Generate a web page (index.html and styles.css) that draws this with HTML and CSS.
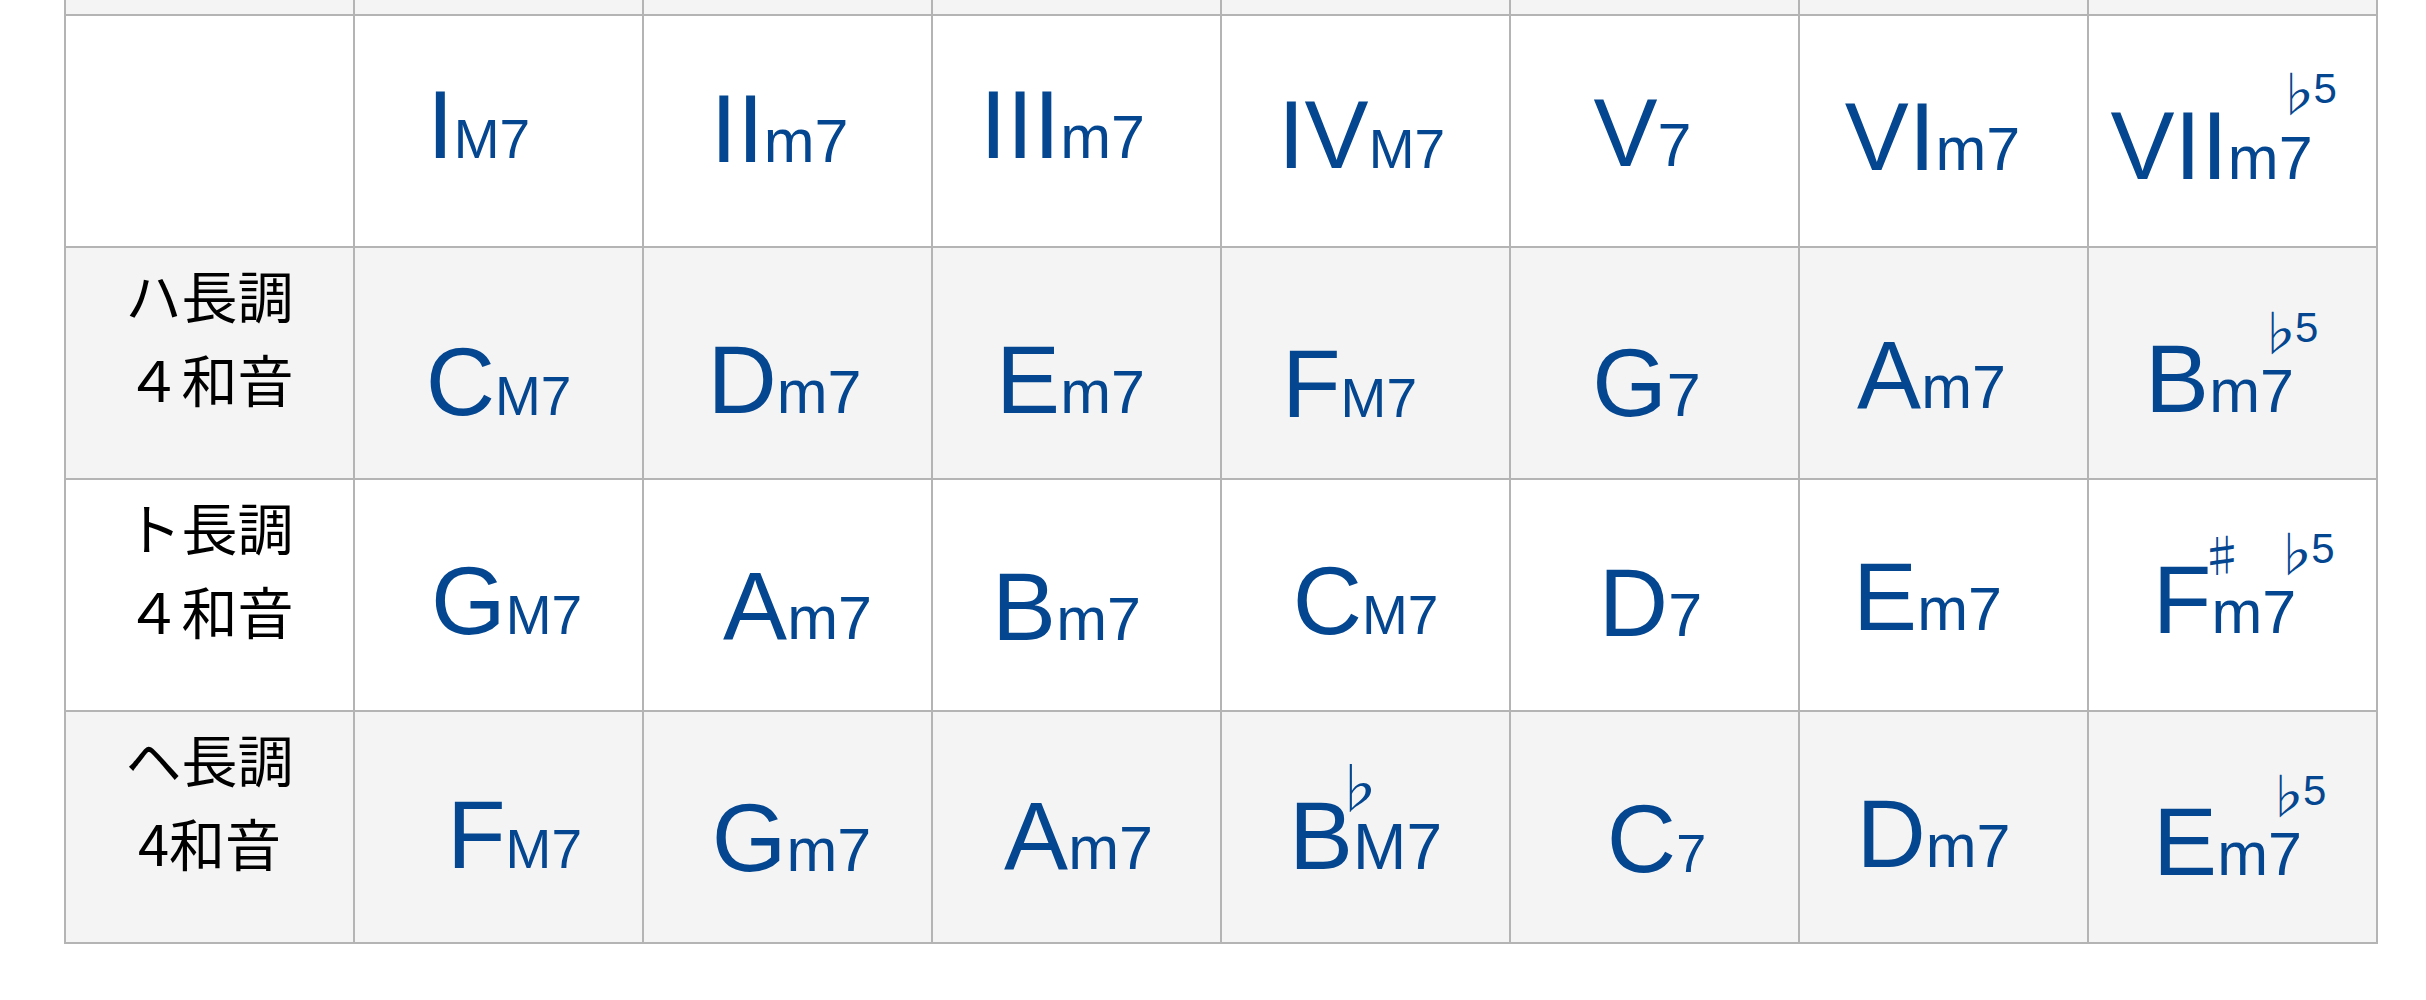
FILE: index.html
```html
<!DOCTYPE html>
<html lang="ja">
<head>
<meta charset="utf-8">
<title>4和音</title>
<link rel="stylesheet" href="styles.css">
</head>
<body>
<div class="table">
  <div class="row alt stub">
    <div class="cell"></div><div class="cell"></div><div class="cell"></div><div class="cell"></div>
    <div class="cell"></div><div class="cell"></div><div class="cell"></div><div class="cell"></div>
  </div>

  <div class="row">
    <div class="cell label"></div>
    <div class="cell"><div class="chord n-h1"><span class="root">I</span><span class="q qM">M7</span></div></div>
    <div class="cell"><div class="chord n-h2"><span class="root">II</span><span class="q">m7</span></div></div>
    <div class="cell"><div class="chord n-h3"><span class="root">III</span><span class="q">m7</span></div></div>
    <div class="cell"><div class="chord n-h4"><span class="root">IV</span><span class="q qM">M7</span></div></div>
    <div class="cell"><div class="chord n-h5"><span class="root">V</span><span class="q">7</span></div></div>
    <div class="cell"><div class="chord n-h6"><span class="root">VI</span><span class="q">m7</span></div></div>
    <div class="cell"><div class="chord n-h7"><span class="root">VII</span><span class="q">m7<span class="ext high"><span class="fl">♭</span><span class="n5">5</span></span></span></div></div>
  </div>

  <div class="row alt">
    <div class="cell label"><span>ハ長調</span><span>４和音</span></div>
    <div class="cell"><div class="chord n-a1"><span class="root">C</span><span class="q qM">M7</span></div></div>
    <div class="cell"><div class="chord n-a2"><span class="root">D</span><span class="q">m7</span></div></div>
    <div class="cell"><div class="chord n-a3"><span class="root">E</span><span class="q">m7</span></div></div>
    <div class="cell"><div class="chord n-a4"><span class="root">F</span><span class="q qM">M7</span></div></div>
    <div class="cell"><div class="chord n-a5"><span class="root">G</span><span class="q">7</span></div></div>
    <div class="cell"><div class="chord n-a6"><span class="root">A</span><span class="q">m7</span></div></div>
    <div class="cell"><div class="chord n-a7"><span class="root">B</span><span class="q">m7<span class="ext"><span class="fl">♭</span><span class="n5">5</span></span></span></div></div>
  </div>

  <div class="row">
    <div class="cell label"><span>ト長調</span><span>４和音</span></div>
    <div class="cell"><div class="chord n-b1"><span class="root">G</span><span class="q qM">M7</span></div></div>
    <div class="cell"><div class="chord n-b2"><span class="root">A</span><span class="q">m7</span></div></div>
    <div class="cell"><div class="chord n-b3"><span class="root">B</span><span class="q">m7</span></div></div>
    <div class="cell"><div class="chord n-b4"><span class="root">C</span><span class="q qM">M7</span></div></div>
    <div class="cell"><div class="chord n-b5"><span class="root">D</span><span class="q">7</span></div></div>
    <div class="cell"><div class="chord n-b6"><span class="root">E</span><span class="q">m7</span></div></div>
    <div class="cell"><div class="chord n-b7"><span class="root">F<span class="acc sharp">♯</span></span><span class="q">m7<span class="ext far"><span class="fl">♭</span><span class="n5">5</span></span></span></div></div>
  </div>

  <div class="row alt">
    <div class="cell label"><span>ヘ長調</span><span>4和音</span></div>
    <div class="cell"><div class="chord n-c1"><span class="root">F</span><span class="q qM">M7</span></div></div>
    <div class="cell"><div class="chord n-c2"><span class="root">G</span><span class="q">m7</span></div></div>
    <div class="cell"><div class="chord n-c3"><span class="root">A</span><span class="q">m7</span></div></div>
    <div class="cell"><div class="chord n-c4"><span class="root">B<span class="acc flat">♭</span></span><span class="q qM qL">M7</span></div></div>
    <div class="cell"><div class="chord n-c5"><span class="root">C</span><span class="q qS">7</span></div></div>
    <div class="cell"><div class="chord n-c6"><span class="root">D</span><span class="q">m7</span></div></div>
    <div class="cell"><div class="chord n-c7"><span class="root">E</span><span class="q">m7<span class="ext"><span class="fl">♭</span><span class="n5">5</span></span></span></div></div>
  </div>
</div>
</body>
</html>
```

FILE: styles.css
```css
* { box-sizing: border-box; }

html, body {
  margin: 0;
  padding: 0;
  background: #ffffff;
}

body {
  font-family: "Liberation Sans", Arial, sans-serif;
}

.table {
  margin-left: 64px;
  width: 2314px;
  border-left: 2px solid #b4b4b4;
}

.row {
  display: grid;
  grid-template-columns: repeat(8, 289px);
  height: 232px;
  border-bottom: 2px solid #b4b4b4;
  background: #ffffff;
}

.row.alt { background: #f4f4f4; }

.row.stub { height: 16px; }

.cell {
  border-right: 2px solid #b4b4b4;
  display: flex;
  justify-content: center;
  align-items: flex-start;
  padding-top: 75px;
}

.stub .cell { padding: 0; }

.label {
  flex-direction: column;
  justify-content: flex-start;
  align-items: center;
  padding-top: 4px;
  font-family: "Noto Sans CJK JP", sans-serif;
  font-size: 56px;
  line-height: 84px;
  color: #000000;
}

.chord {
  display: flex;
  align-items: baseline;
  color: #04468f;
  font-size: 96px;
  line-height: 100px;
  white-space: nowrap;
}

.root { position: relative; }

.q {
  position: relative;
  font-size: 61px;
  line-height: 61px;
}
.q.qM { font-size: 55px; line-height: 55px; }
.q.qL { font-size: 64px; line-height: 64px; }
.q.qS { font-size: 54px; line-height: 54px; }

.acc {
  position: absolute;
  font-family: "Noto Sans CJK JP", sans-serif;
}
.acc.sharp {
  left: calc(100% - 12px);
  top: -19px;
  font-size: 45px;
  line-height: 45px;
}
.acc.flat {
  left: calc(100% - 22px);
  top: -27px;
  font-size: 54px;
  line-height: 54px;
}

.ext {
  position: absolute;
  left: calc(100% - 39px);
  top: -54px;
  display: flex;
  align-items: flex-start;
  font-size: 42px;
  line-height: 42px;
}
.ext.far { left: calc(100% - 25px); }
.ext.high { top: -60px; }

.fl {
  font-family: "Noto Sans CJK JP", sans-serif;
  font-size: 48px;
  line-height: 48px;
  margin: -1px -8px 0 0;
}
.n5 { line-height: 42px; }

/* per-cell placement, as in the original sheet */
.n-h1 { margin: -16px 0 0 -40px; }
.n-h2 { margin: -12px 0 0 -16px; }
.n-h3 { margin: -16px 0 0 -28px; }
.n-h4 { margin: -6px 0 0 -8px; }
.n-h5 { margin: -8px 0 0 -24px; }
.n-h6 { margin: -4px 0 0 -22px; }
.n-h7 { margin: 5px 0 0 -42px; }

.n-a1 { margin: 9px 0 0 0; }
.n-a2 { margin: 7px 0 0 -6px; }
.n-a3 { margin: 7px 0 0 -12px; }
.n-a4 { margin: 11px 0 0 -32px; }
.n-a5 { margin: 10px 0 0 -16px; }
.n-a6 { margin: 2px 0 0 -24px; }
.n-a7 { margin: 6px 0 0 -26px; }

.n-b1 { margin: -4px 0 0 16px; }
.n-b2 { margin: 1px 0 0 20px; }
.n-b3 { margin: 2px 0 0 -20px; }
.n-b4 { margin: -4px 0 0 0; }
.n-b5 { margin: -2px 0 0 -8px; }
.n-b6 { margin: -8px 0 0 -32px; }
.n-b7 { margin: -5px 0 0 -16px; }

.n-c1 { margin: -2px 0 0 32px; }
.n-c2 { margin: 1px 0 0 8px; }
.n-c3 { margin: -1px 0 0 4px; }
.n-c4 { margin: -1px 0 0 0; }
.n-c5 { margin: 2px 0 0 4px; }
.n-c6 { margin: -3px 0 0 -20px; }
.n-c7 { margin: 5px 0 0 -10px; }
```
